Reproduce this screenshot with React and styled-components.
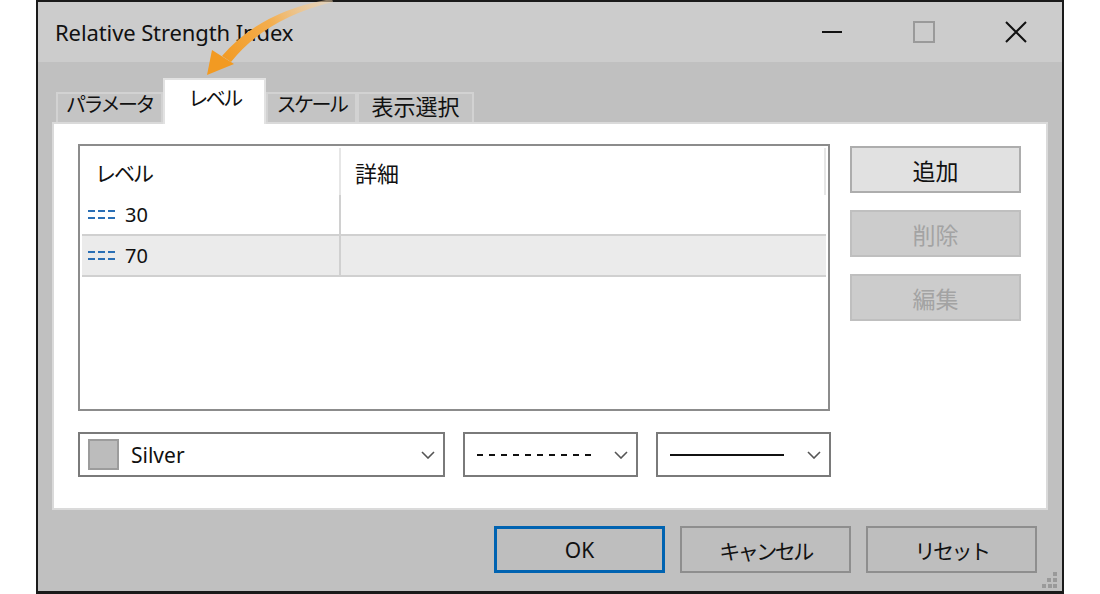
import React from "react";
import styled, { createGlobalStyle } from "styled-components";

const GlobalStyle = createGlobalStyle`
  html, body {
    margin: 0;
    padding: 0;
    background: #ffffff;
  }
  body {
    font-family: "Noto Sans", "Noto Sans CJK JP", sans-serif;
    color: #000;
    overflow: hidden;
  }
  * {
    box-sizing: border-box;
  }
`;

const tabs = [
  { label: "パラメータ", width: 107 },
  { label: "レベル", width: 103, active: true },
  { label: "スケール", width: 91 },
  { label: "表示選択", width: 117, kanji: true },
];

const levels = [
  { value: "30", detail: "" },
  { value: "70", detail: "", selected: true },
];

const DotsIcon = () => (
  <svg width="30" height="12" viewBox="0 0 30 12">
    {[0, 10, 20].map((x) => (
      <g key={x} fill="#2a6fb5">
        <rect x={x} y="1" width="7" height="2" />
        <rect x={x} y="8" width="7" height="2" />
      </g>
    ))}
  </svg>
);

const Chevron = () => (
  <svg width="14" height="8" viewBox="0 0 14 8">
    <path d="M1 1 L7 7 L13 1" fill="none" stroke="#555" strokeWidth="1.6" />
  </svg>
);

const App = () => {
  return (
    <>
      <GlobalStyle />
      <Page>
        <Window>
          <TitleBar>
            <Title>Relative Strength Index</Title>
            <Controls>
              <Control>
                <svg width="20" height="4" viewBox="0 0 20 4">
                  <rect x="0" y="1" width="20" height="2" fill="#111" />
                </svg>
              </Control>
              <Control>
                <svg width="22" height="22" viewBox="0 0 22 22">
                  <rect x="1" y="1" width="20" height="20" fill="none" stroke="#9a9a9a" strokeWidth="2" />
                </svg>
              </Control>
              <Control>
                <svg width="22" height="22" viewBox="0 0 22 22">
                  <path d="M1 1 L21 21 M21 1 L1 21" stroke="#111" strokeWidth="2" />
                </svg>
              </Control>
            </Controls>
          </TitleBar>

          <Body>
            <TabRow>
              {tabs.map((t) => (
                <Tab
                  key={t.label}
                  $active={t.active}
                  $kanji={t.kanji}
                  style={{ width: t.width }}
                >
                  {t.label}
                </Tab>
              ))}
            </TabRow>

            <Panel>
              <TopRow>
                <ListBox>
                  <HeaderRow>
                    <HeaderCell $first>レベル</HeaderCell>
                    <HeaderCell $kanji>詳細</HeaderCell>
                  </HeaderRow>
                  {levels.map((l) => (
                    <LevelRow key={l.value} $selected={l.selected}>
                      <LevelCell $first>
                        <DotsIcon />
                        <span>{l.value}</span>
                      </LevelCell>
                      <LevelCell>{l.detail}</LevelCell>
                    </LevelRow>
                  ))}
                </ListBox>

                <SideButtons>
                  <SideButton>追加</SideButton>
                  <SideButton disabled>削除</SideButton>
                  <SideButton disabled>編集</SideButton>
                </SideButtons>
              </TopRow>

              <ComboRow>
                <Combo $width={367}>
                  <Swatch />
                  <ComboText>Silver</ComboText>
                  <Chevron />
                </Combo>
                <Combo $width={175}>
                  <LinePreview $dashed />
                  <Chevron />
                </Combo>
                <Combo $width={175}>
                  <LinePreview />
                  <Chevron />
                </Combo>
              </ComboRow>
            </Panel>

            <Footer>
              <DialogButton $default>OK</DialogButton>
              <DialogButton>キャンセル</DialogButton>
              <DialogButton>リセット</DialogButton>
            </Footer>

            <Grip>
              <svg width="16" height="16" viewBox="0 0 16 16" fill="#9a9a9a">
                <rect x="11" y="0" width="4" height="4" />
                <rect x="5" y="6" width="4" height="4" />
                <rect x="11" y="6" width="4" height="4" />
                <rect x="0" y="12" width="4" height="4" />
                <rect x="6" y="12" width="4" height="4" />
                <rect x="11" y="12" width="4" height="4" />
              </svg>
            </Grip>
          </Body>
        </Window>

        <Arrow width="140" height="82" viewBox="195 0 140 82">
          <defs>
            <linearGradient id="arrowFade" x1="330" y1="0" x2="220" y2="60" gradientUnits="userSpaceOnUse">
              <stop offset="0" stopColor="#f7d9b0" stopOpacity="0.5" />
              <stop offset="0.5" stopColor="#f3ae4f" />
              <stop offset="1" stopColor="#f29a22" />
            </linearGradient>
          </defs>
          <path
            d="M332 -1 Q 262 10 222 56 L 231 62 Q 266 18 333 2 Z"
            fill="url(#arrowFade)"
          />
          <polygon points="207,75 212,50 234,64" fill="#f29a22" />
        </Arrow>
      </Page>
    </>
  );
};

export default App;

const Page = styled.div`
  position: relative;
  width: 1100px;
  height: 594px;
`;

const Window = styled.div`
  margin-left: 36px;
  width: 1028px;
  height: 594px;
  border: 2px solid #1a1a1a;
  border-bottom-width: 3px;
  display: flex;
  flex-direction: column;
`;

const TitleBar = styled.div`
  height: 60px;
  background: #cccccc;
  display: flex;
  align-items: center;
  padding-left: 17px;
`;

const Title = styled.div`
  font-size: 22px;
  letter-spacing: -0.1px;
  flex: 1;
  color: #111;
`;

const Controls = styled.div`
  display: flex;
  height: 100%;
`;

const Control = styled.div`
  width: 92px;
  height: 100%;
  display: flex;
  align-items: center;
  justify-content: center;
`;

const Body = styled.div`
  position: relative;
  flex: 1;
  background: #c0c0c0;
  padding: 16px 14px 0 14px;
  display: flex;
  flex-direction: column;
`;

const TabRow = styled.div`
  display: flex;
  align-items: flex-end;
  height: 44px;
  padding-left: 4px;
  position: relative;
  z-index: 1;
`;

const Tab = styled.div`
  height: ${(p) => (p.$active ? "46px" : "30px")};
  margin-bottom: ${(p) => (p.$active ? "-2px" : "0")};
  background: ${(p) => (p.$active ? "#ffffff" : "#c4c4c4")};
  border: 2px solid ${(p) => (p.$active ? "#e2e2e2" : "#d2d2d2")};
  border-bottom: none;
  display: flex;
  align-items: flex-start;
  padding-top: ${(p) => (p.$active ? "9px" : "1px")};
  justify-content: center;
  line-height: 1;
  font-size: ${(p) => (p.$kanji ? "22px" : "20px")};
  letter-spacing: ${(p) => (p.$kanji ? "0" : "-2.5px")};
  color: #111;
`;

const Panel = styled.div`
  height: 388px;
  background: #ffffff;
  border: 2px solid #dadada;
  padding: 20px 0 0 24px;
  display: flex;
  flex-direction: column;
`;

const TopRow = styled.div`
  display: flex;
  align-items: flex-start;
`;

const ListBox = styled.div`
  width: 752px;
  height: 267px;
  border: 2px solid #8c8c8c;
  padding: 0 2px;
`;

const HeaderRow = styled.div`
  display: grid;
  grid-template-columns: 259px 485px;
  height: 49px;
`;

const HeaderCell = styled.div`
  display: flex;
  align-items: center;
  padding-left: ${(p) => (p.$first ? "13px" : "14px")};
  font-size: ${(p) => (p.$kanji ? "22px" : "21px")};
  letter-spacing: ${(p) => (p.$kanji ? "0" : "-2px")};
  border-right: 2px solid #e6e6e6;
  margin-top: 2px;
  color: #111;
`;

const LevelRow = styled.div`
  display: grid;
  grid-template-columns: 259px 485px;
  height: 41px;
  background: ${(p) => (p.$selected ? "#ebebeb" : "#ffffff")};
  border-bottom: 2px solid #d0d0d0;
`;

const LevelCell = styled.div`
  display: flex;
  align-items: center;
  gap: 7px;
  padding-left: 6px;
  font-size: 20px;
  color: #111;
  border-right: ${(p) => (p.$first ? "2px solid #d0d0d0" : "none")};
`;

const SideButtons = styled.div`
  display: flex;
  flex-direction: column;
  gap: 17px;
  margin-left: 20px;
  margin-top: 2px;
`;

const SideButton = styled.div`
  width: 171px;
  height: 47px;
  background: ${(p) => (p.disabled ? "#cccccc" : "#e1e1e1")};
  border: 2px solid ${(p) => (p.disabled ? "#bfbfbf" : "#adadad")};
  color: ${(p) => (p.disabled ? "#a3a3a3" : "#111")};
  display: flex;
  align-items: center;
  justify-content: center;
  font-size: 23px;
`;

const ComboRow = styled.div`
  display: flex;
  gap: 18px;
  margin-top: 21px;
`;

const Combo = styled.div`
  width: ${(p) => p.$width}px;
  height: 45px;
  border: 2px solid #7a7a7a;
  display: flex;
  align-items: center;
  padding: 0 8px 0 12px;
  gap: 12px;
  & > svg {
    margin-left: auto;
  }
`;

const Swatch = styled.div`
  width: 31px;
  height: 31px;
  margin-left: -4px;
  background: #bcbcbc;
  border: 2px solid #9c9c9c;
`;

const ComboText = styled.span`
  font-size: 21px;
  color: #111;
`;

const LinePreview = styled.div`
  width: 114px;
  height: 2px;
  background: ${(p) =>
    p.$dashed
      ? "repeating-linear-gradient(to right, #111 0 6px, transparent 6px 12px)"
      : "#111"};
`;

const Footer = styled.div`
  display: flex;
  justify-content: flex-end;
  gap: 15px;
  padding: 16px 11px 0 0;
`;

const DialogButton = styled.div`
  width: 171px;
  height: 47px;
  border: ${(p) => (p.$default ? "3px solid #0063b1" : "2px solid #8e8e8e")};
  background: #bebebe;
  display: flex;
  align-items: center;
  justify-content: center;
  font-size: 21px;
  letter-spacing: ${(p) => (p.$default ? "0" : "-2.5px")};
  color: #111;
`;

const Grip = styled.div`
  position: absolute;
  right: 4px;
  bottom: 3px;
  width: 16px;
  height: 16px;
  display: flex;
`;

const Arrow = styled.svg`
  position: absolute;
  left: 195px;
  top: 0;
  pointer-events: none;
`;
